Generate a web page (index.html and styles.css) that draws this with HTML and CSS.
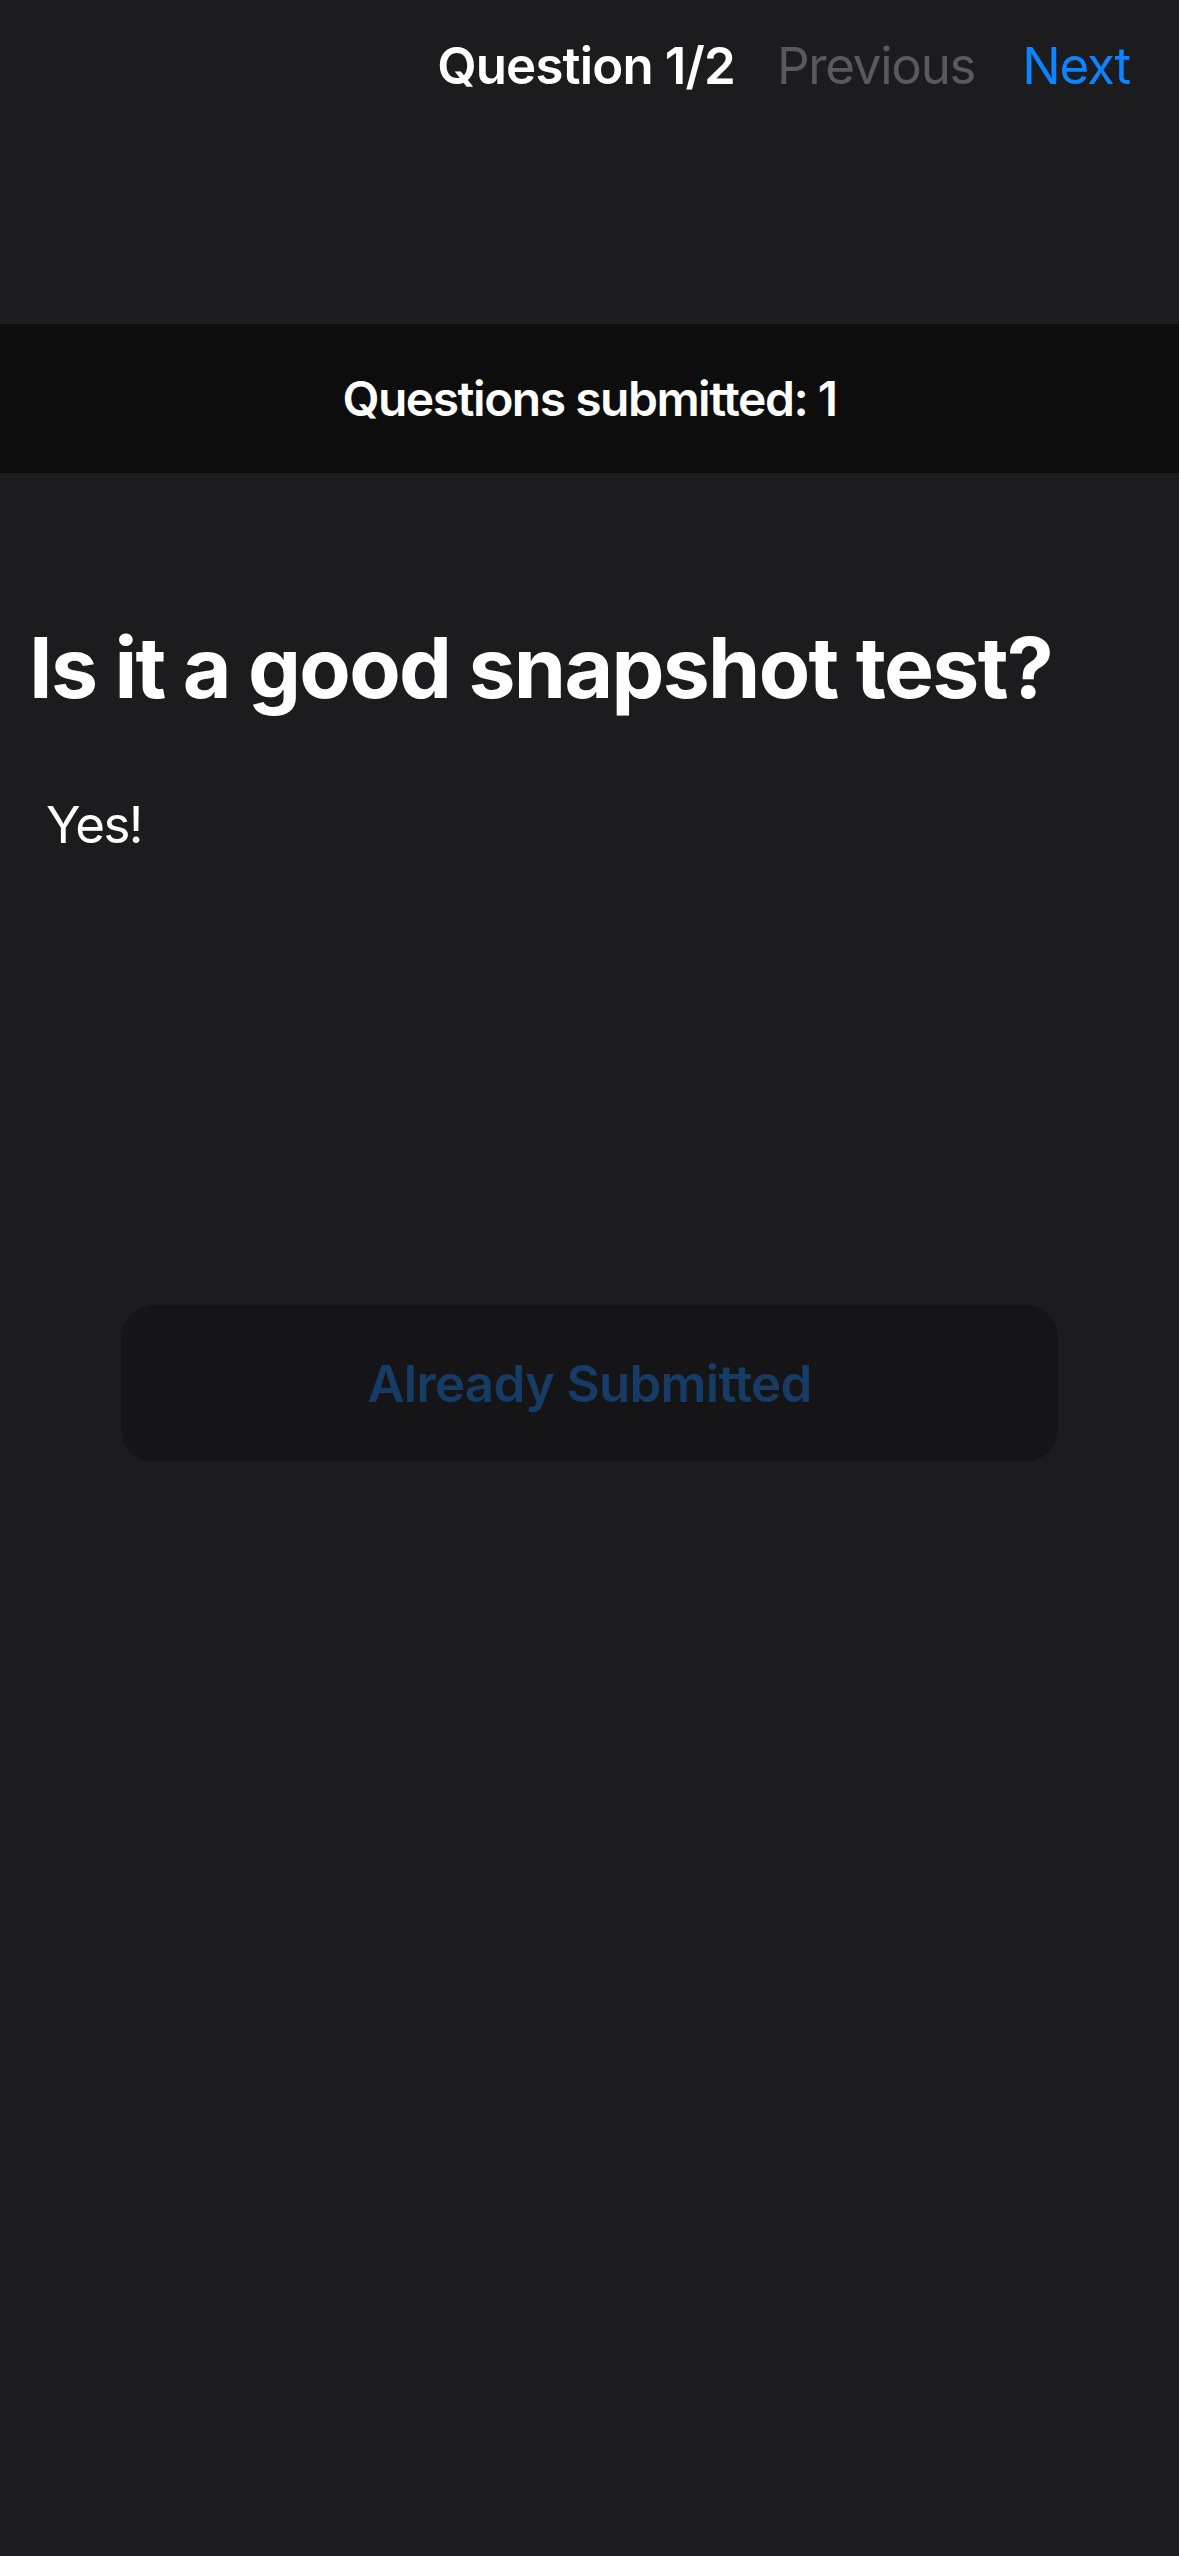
FILE: index.html
```html
<!DOCTYPE html>
<html lang="en">
<head>
<meta charset="utf-8">
<title>Question 1/2</title>
<link rel="stylesheet" href="styles.css">
</head>
<body>
<div class="screen">
  <nav class="nav">
    <span class="nav-title">Question 1/2</span>
    <span class="nav-prev">Previous</span>
    <span class="nav-next">Next</span>
  </nav>
  <div class="banner">
    <span class="banner-text">Questions submitted: 1</span>
  </div>
  <main class="content">
    <h1 class="question">Is it a good snapshot test?</h1>
    <p class="answer">Yes!</p>
    <div class="button-wrap">
      <button class="submit-btn" type="button">Already Submitted</button>
    </div>
  </main>
</div>
</body>
</html>
```

FILE: styles.css
```css
html, body {
  margin: 0;
  padding: 0;
  background: #1c1c1e;
}
body {
  font-family: Inter, "Noto Sans", "Liberation Sans", sans-serif;
  color: #ffffff;
}
.screen {
  width: 1179px;
  min-height: 2556px;
  background: #1c1c1e;
}
.nav {
  display: flex;
  justify-content: flex-end;
  align-items: center;
  padding: 36px 49px 0 0;
  height: 60px;
  font-size: 51px;
  line-height: 60px;
}
.nav-title {
  font-weight: 600;
  color: #ffffff;
  letter-spacing: -0.85px;
}
.nav-prev {
  margin-left: 42px;
  color: #5a5a5e;
  letter-spacing: -1.25px;
}
.nav-next {
  margin-left: 47px;
  color: #0a84ff;
  letter-spacing: -1.2px;
}
.banner {
  margin-top: 228px;
  height: 149px;
  background: #0d0d0d;
  display: flex;
  align-items: center;
  justify-content: center;
}
.banner-text {
  font-size: 48px;
  font-weight: 600;
  line-height: 58px;
  letter-spacing: -1.5px;
}
.content {
  display: flex;
  flex-direction: column;
}
.question {
  margin: 145px 0 0 0;
  padding-left: 29px;
  font-size: 84px;
  line-height: 100px;
  font-weight: 700;
  letter-spacing: -1.7px;
}
.answer {
  margin: 77px 0 0 0;
  padding-left: 46px;
  font-size: 51px;
  line-height: 60px;
  font-weight: 400;
  letter-spacing: -1.5px;
}
.button-wrap {
  display: flex;
  justify-content: center;
  margin-top: 450px;
}
.submit-btn {
  width: 937px;
  height: 157px;
  border: none;
  border-radius: 33px;
  background: #151517;
  color: #163c66;
  font-family: Inter, "Noto Sans", "Liberation Sans", sans-serif;
  font-size: 51px;
  font-weight: 600;
  letter-spacing: -0.7px;
  padding: 0;
}
```
